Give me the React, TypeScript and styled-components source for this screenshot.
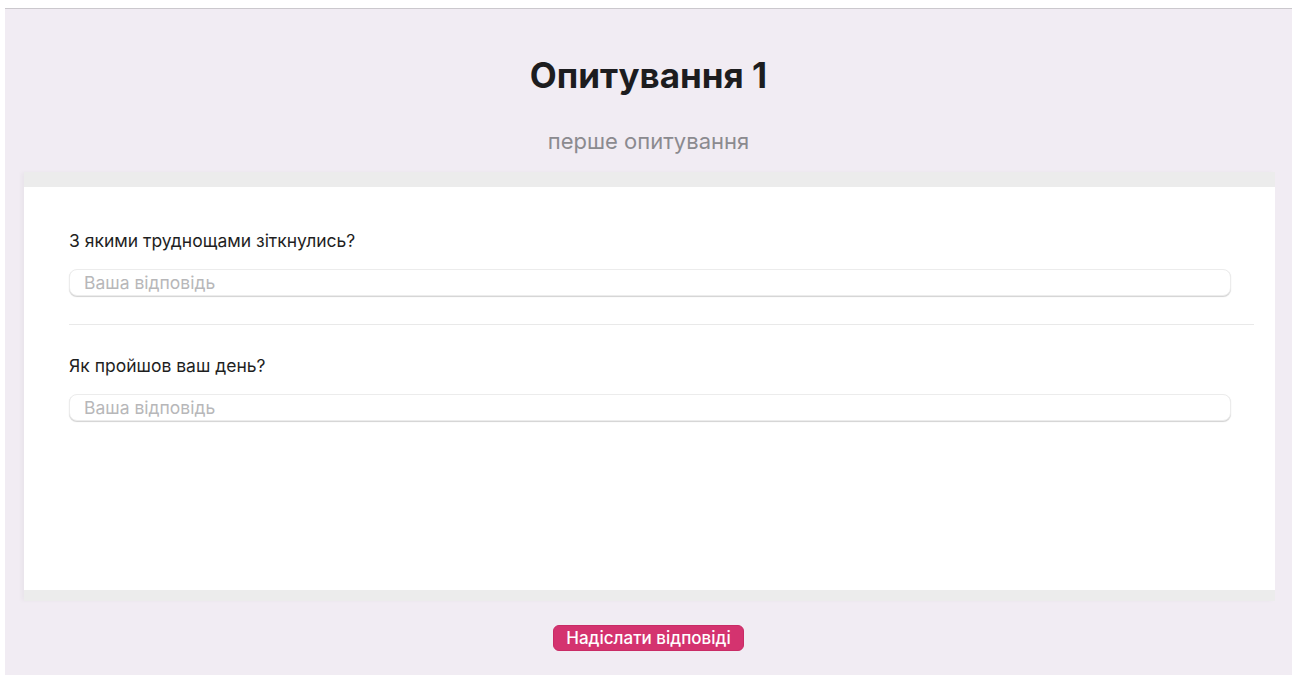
import { createGlobalStyle, styled } from 'styled-components';

const questions = ['З якими труднощами зіткнулись?', 'Як пройшов ваш день?'];

const App = () => {
  return (
    <>
      <GlobalStyle />
      <Page>
        <Header>
          <Title>Опитування 1</Title>
          <Subtitle>перше опитування</Subtitle>
        </Header>
        <Sheet>
          <Panel>
            {questions.map((q, i) => (
              <Question key={q} $last={i === questions.length - 1}>
                <Label>{q}</Label>
                <Input type="text" placeholder="Ваша відповідь" />
              </Question>
            ))}
          </Panel>
        </Sheet>
        <Footer>
          <SubmitButton type="submit">Надіслати відповіді</SubmitButton>
        </Footer>
      </Page>
    </>
  );
};

export default App;

const GlobalStyle = createGlobalStyle`
  html, body {
    margin: 0;
    background: #ffffff;
  }
  body {
    font-family: Inter, "Noto Sans", sans-serif;
    color: #1d1d1f;
  }
`;

const Page = styled.div`
  margin: 8px 6px 0 5px;
  border-top: 1px solid #cbc8cd;
  background: #f1ecf3;
  height: 666px;
  display: flex;
  flex-direction: column;
`;

const Header = styled.header`
  display: flex;
  flex-direction: column;
  align-items: center;
  padding-top: 46px;
  height: 117px;
`;

const Title = styled.h1`
  margin: 0;
  font-size: 35px;
  font-weight: 700;
  line-height: 40px;
  color: #1d1d1f;
`;

const Subtitle = styled.p`
  margin: 34px 0 0;
  font-size: 22px;
  line-height: 24px;
  color: #8b8a8f;
`;

const Sheet = styled.div`
  margin: 0 17px 0 19px;
  padding: 15px 0 11px;
  background: #ececec;
  box-shadow: -3px 0 4px rgba(0, 0, 0, 0.03);
`;

const Panel = styled.form`
  background: #ffffff;
  height: 403px;
  padding: 36px 21px 0 45px;
  box-sizing: border-box;
`;

const Question = styled.div<{ $last: boolean }>`
  padding: 8px 0 28px;
  border-bottom: ${(p) => (p.$last ? 'none' : '1px solid #e9e9e9')};
  margin-bottom: 23px;
`;

const Label = styled.label`
  display: block;
  font-size: 17.5px;
  line-height: 20px;
  color: #1f1f1f;
  margin-bottom: 18px;
`;

const Input = styled.input`
  display: block;
  box-sizing: border-box;
  width: calc(100% - 23px);
  height: 27px;
  padding: 0 14px;
  font: inherit;
  font-size: 17.5px;
  border: 1px solid #ececec;
  border-radius: 8px;
  box-shadow: 0 1px 1px rgba(0, 0, 0, 0.18);
  background: #ffffff;
  outline: none;

  &::placeholder {
    color: #b7b7b9;
  }
`;

const Footer = styled.div`
  display: flex;
  justify-content: center;
  padding-top: 24px;
`;

const SubmitButton = styled.button`
  font: inherit;
  font-size: 17px;
  font-weight: 500;
  cursor: pointer;
  color: #ffffff;
  background: #d4336f;
  border: 1px solid #c92b65;
  border-radius: 6px;
  height: 26px;
  padding: 0 12px;
  line-height: 24px;
`;
